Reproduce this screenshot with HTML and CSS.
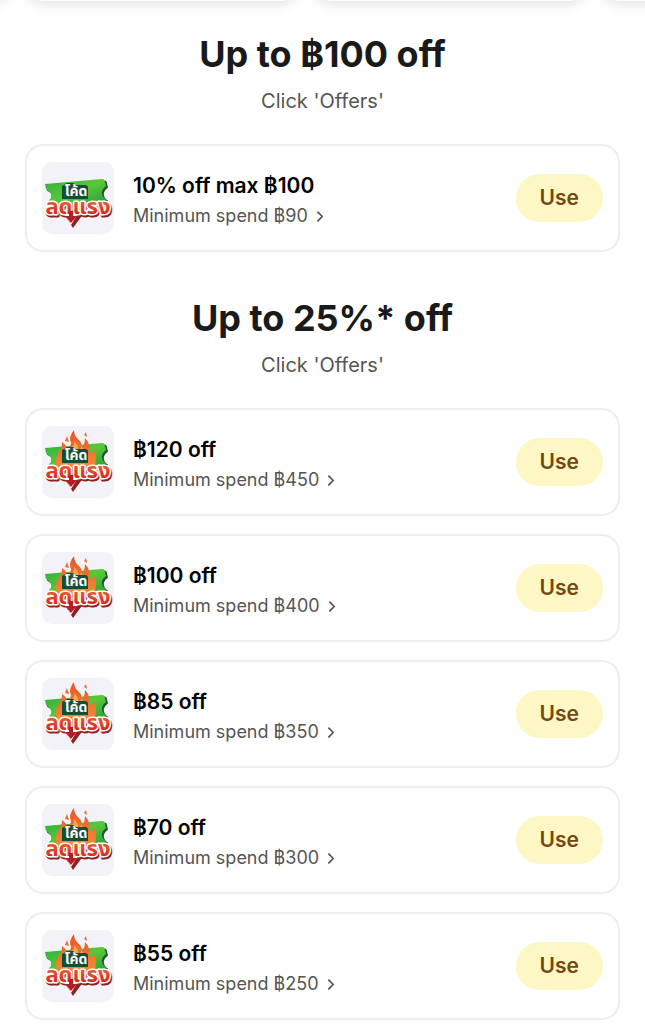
FILE: index.html
```html
<!DOCTYPE html>
<html lang="en">
<head>
<meta charset="utf-8">
<meta name="viewport" content="width=device-width, initial-scale=1">
<title>Offers</title>
<link rel="stylesheet" href="styles.css">
</head>
<body>
<svg class="defs" aria-hidden="true">
  <defs>
    <linearGradient id="green" x1="0" y1="0" x2="1" y2="1">
      <stop offset="0" stop-color="#2fae3c"/><stop offset=".5" stop-color="#58c83a"/><stop offset="1" stop-color="#2c9a38"/>
    </linearGradient>
    <linearGradient id="red" x1="0" y1="0" x2="0" y2="1">
      <stop offset="0.2" stop-color="#f0692c"/><stop offset="0.8" stop-color="#cf1f24"/>
    </linearGradient>
    <linearGradient id="fire" x1="0" y1="0" x2="0" y2="1">
      <stop offset="0" stop-color="#e9532a"/><stop offset="1" stop-color="#f58a35"/>
    </linearGradient>
    <symbol id="ticket" viewBox="0 0 72 72">
      <path d="M5 23 62 18.500q3 0 3 3l1 4q-5 4-4 8 1 4 4 5l-2 6H9l-1-5q3-2 2-6-1-3-5-5z" fill="#21582f"/>
      <path d="M3 22 60 17q3 0 3 3l1 4q-5 4-4 8 1 4 4 5l-2 6H8l-1-5q3-2 2-6-1-3-5-5z" fill="url(#green)"/>
    </symbol>
    <symbol id="flame" viewBox="0 0 72 72">
      <path d="M15 41q-3-9 2-15 3-4 3-10 5 3 5 8 4-4 4-7-3-6 3-13 0 6 5 10 4 4 2 8 4-3 4-10 5 5 4 11 1 4 1 5 3-2 4-5 4 9 0 18z" fill="url(#fire)"/>
      <path d="M27 29q-1-5 3-8 3-3 2-6 5 4 4 9 3-1 3-4 5 6 2 12z" fill="#f9a845"/>
      <path d="M23 15l2-5 2 6zM42 9l2-3 1 5z" fill="#ed6b2c"/>
    </symbol>
    <symbol id="wordmark" viewBox="0 0 72 72">
      <path d="M20 25q0-2 2-2l3-2h6l3 2h9q3 0 3 3v11H20z" fill="#174d36"/>
      <text x="34" y="34" class="mark-small">โค้ด</text>
      <path d="M24 55h15l-8 11z" fill="#8e2421"/>
      <text x="37" y="54" class="mark-shadow">ลดแรง</text>
      <path d="M21 50h16l-8 13z" fill="#fff"/>
      <text x="36" y="52" class="mark-large">ลดแรง</text>
      <path d="M27 49v5h-4l6 7 6-7h-4v-5z" fill="#b51c27"/>
    </symbol>
  </defs>
</svg>

<div class="strip"><div class="strip-row"><div class="tile"></div><div class="tile"></div><div class="tile"></div><div class="tile"></div></div></div>

<main>
  <section>
    <h1>Up to ฿100 off</h1>
    <p class="hint">Click 'Offers'</p>
    <ul class="offers">
      <li class="card">
        <svg class="logo" viewBox="0 0 72 72" role="img" aria-label="Discount code"><use href="#ticket"/><use href="#wordmark"/></svg>
        <div class="info"><h2>10% off max ฿100</h2><a href="#">Minimum spend ฿90<svg class="chevron" viewBox="0 0 8 12"><path d="m1 1 5 5-5 5"/></svg></a></div>
        <button type="button">Use</button>
      </li>
    </ul>
  </section>
  <section>
    <h1>Up to 25%* off</h1>
    <p class="hint">Click 'Offers'</p>
    <ul class="offers">
      <li class="card">
        <svg class="logo" viewBox="0 0 72 72" role="img" aria-label="Discount code"><use href="#ticket"/><use href="#flame"/><use href="#wordmark"/></svg>
        <div class="info"><h2>฿120 off</h2><a href="#">Minimum spend ฿450<svg class="chevron" viewBox="0 0 8 12"><path d="m1 1 5 5-5 5"/></svg></a></div>
        <button type="button">Use</button>
      </li>
      <li class="card">
        <svg class="logo" viewBox="0 0 72 72" role="img" aria-label="Discount code"><use href="#ticket"/><use href="#flame"/><use href="#wordmark"/></svg>
        <div class="info"><h2>฿100 off</h2><a href="#">Minimum spend ฿400<svg class="chevron" viewBox="0 0 8 12"><path d="m1 1 5 5-5 5"/></svg></a></div>
        <button type="button">Use</button>
      </li>
      <li class="card">
        <svg class="logo" viewBox="0 0 72 72" role="img" aria-label="Discount code"><use href="#ticket"/><use href="#flame"/><use href="#wordmark"/></svg>
        <div class="info"><h2>฿85 off</h2><a href="#">Minimum spend ฿350<svg class="chevron" viewBox="0 0 8 12"><path d="m1 1 5 5-5 5"/></svg></a></div>
        <button type="button">Use</button>
      </li>
      <li class="card">
        <svg class="logo" viewBox="0 0 72 72" role="img" aria-label="Discount code"><use href="#ticket"/><use href="#flame"/><use href="#wordmark"/></svg>
        <div class="info"><h2>฿70 off</h2><a href="#">Minimum spend ฿300<svg class="chevron" viewBox="0 0 8 12"><path d="m1 1 5 5-5 5"/></svg></a></div>
        <button type="button">Use</button>
      </li>
      <li class="card">
        <svg class="logo" viewBox="0 0 72 72" role="img" aria-label="Discount code"><use href="#ticket"/><use href="#flame"/><use href="#wordmark"/></svg>
        <div class="info"><h2>฿55 off</h2><a href="#">Minimum spend ฿250<svg class="chevron" viewBox="0 0 8 12"><path d="m1 1 5 5-5 5"/></svg></a></div>
        <button type="button">Use</button>
      </li>
    </ul>
  </section>
</main>
</body>
</html>
```
FILE: styles.css
```css
* { box-sizing: border-box; }
body { margin: 0; background: #fff; font-family: Inter, "Liberation Sans", sans-serif; color: #1a1a1a; }
h1, h2, p, ul { margin: 0; padding: 0; }
.defs { display: block; width: 0; height: 0; }

.strip { height: 32px; overflow: hidden; }
.strip-row { display: flex; gap: 20px; margin: -29px 0 0 -260px; }
.tile { flex: 0 0 268px; height: 30px; border-radius: 18px; background: #fff; box-shadow: 0 3px 14px rgba(0, 0, 0, .12); }

main { padding: 0 25px; }
section { margin-bottom: 44px; text-align: center; }
h1 { font-size: 36px; line-height: 44px; font-weight: 700; }
.hint { margin: 10px 0 28px; font-size: 20px; line-height: 30px; color: #555; }

.offers { display: grid; gap: 18px; list-style: none; }
.card { display: flex; align-items: center; padding: 16px 15px; border: 2px solid #eee; border-radius: 18px; text-align: left; }
.logo { flex: none; width: 72px; height: 72px; border-radius: 10px; background: #f2f2f8; }
.info { flex: 1; margin-left: 19px; padding-top: 6px; }
h2 { font-size: 21px; line-height: 30px; font-weight: 600; color: #000; }
a { display: flex; align-items: center; font-size: 18px; line-height: 30px; color: #555; text-decoration: none; }
.chevron { width: 7px; height: 11px; margin-left: 9px; fill: none; stroke: #555; stroke-width: 2; stroke-linecap: round; stroke-linejoin: round; }
button { padding: 0 24px; border: 0; border-radius: 24px; background: #fcf7c5; color: #76480f; font: 600 21px/48px Inter, "Liberation Sans", sans-serif; }

.mark-small, .mark-large, .mark-shadow { font-family: "Noto Sans Thai", "Noto Sans", sans-serif; font-weight: 700; text-anchor: middle; }
.mark-small { font-size: 14px; fill: #fff; }
.mark-large { font-size: 22px; fill: url(#red); stroke: #fff; stroke-width: 3px; stroke-linejoin: round; paint-order: stroke; }
.mark-shadow { font-size: 22px; fill: #8e2421; stroke: #8e2421; stroke-width: 3px; stroke-linejoin: round; }
```
